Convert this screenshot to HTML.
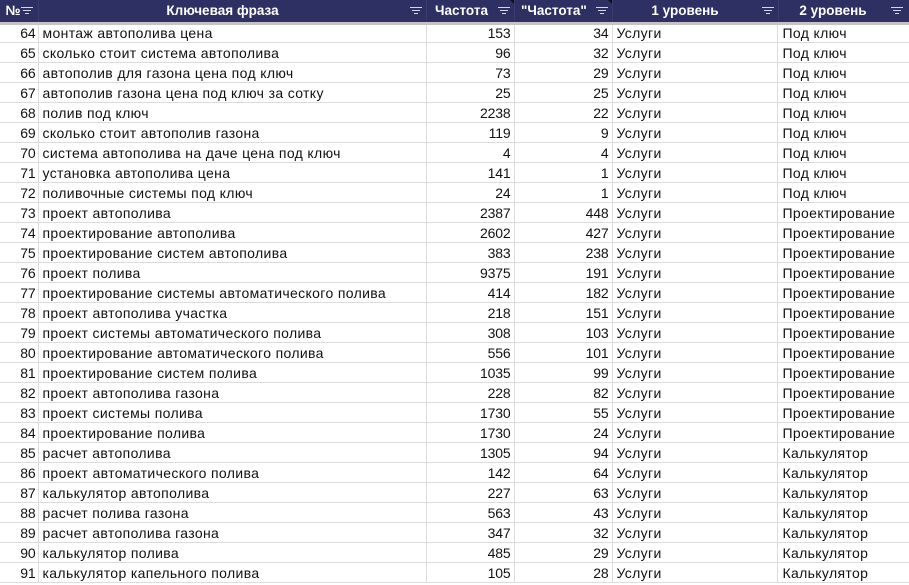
<!DOCTYPE html>
<html lang="ru"><head><meta charset="utf-8"><title>Таблица</title>
<style>
html,body{margin:0;padding:0;background:#fff}
#w{position:relative;width:909px;height:585px;overflow:hidden;font-family:"Liberation Sans",sans-serif;background:#fff}
#h{position:absolute;left:0;top:0;width:909px;height:22px;background:#2e2f62}
#g{position:absolute;left:0;top:22px;width:909px;height:3px;background:#c4c4c4}
.t{position:absolute;top:3px;color:#fff;font-weight:bold;font-size:13.5px;line-height:16px;white-space:nowrap;text-align:center}
.v{position:absolute;top:0;width:1px;height:22px;background:#3a3b6e}
.f{position:absolute;top:7px}
.c{position:absolute;top:0;width:0;height:0;border-top:4px solid #111;border-left:4px solid transparent}
table{position:absolute;left:0;top:23px;border-collapse:collapse;table-layout:fixed;width:909px;font-size:14px;letter-spacing:.35px;color:#111}
td{height:18px;padding:1px 0 0 4px;border-bottom:1px solid #dcdcdc;border-right:1px solid #dcdcdc;line-height:18px;white-space:nowrap;overflow:hidden}
td:nth-child(1),td:nth-child(3),td:nth-child(4){text-align:right;padding:1px 3px 0 0;letter-spacing:-.15px}
td:nth-child(1){padding-right:2px}
td:nth-child(6){border-right:0;padding-left:5px}
</style></head><body><div id="w">
<table><colgroup><col style="width:38px"><col style="width:388px"><col style="width:88px"><col style="width:98px"><col style="width:165px"><col style="width:132px"></colgroup>
<tr><td>64</td><td>монтаж автополива цена</td><td>153</td><td>34</td><td>Услуги</td><td>Под ключ</td></tr>
<tr><td>65</td><td>сколько стоит система автополива</td><td>96</td><td>32</td><td>Услуги</td><td>Под ключ</td></tr>
<tr><td>66</td><td>автополив для газона цена под ключ</td><td>73</td><td>29</td><td>Услуги</td><td>Под ключ</td></tr>
<tr><td>67</td><td>автополив газона цена под ключ за сотку</td><td>25</td><td>25</td><td>Услуги</td><td>Под ключ</td></tr>
<tr><td>68</td><td>полив под ключ</td><td>2238</td><td>22</td><td>Услуги</td><td>Под ключ</td></tr>
<tr><td>69</td><td>сколько стоит автополив газона</td><td>119</td><td>9</td><td>Услуги</td><td>Под ключ</td></tr>
<tr><td>70</td><td>система автополива на даче цена под ключ</td><td>4</td><td>4</td><td>Услуги</td><td>Под ключ</td></tr>
<tr><td>71</td><td>установка автополива цена</td><td>141</td><td>1</td><td>Услуги</td><td>Под ключ</td></tr>
<tr><td>72</td><td>поливочные системы под ключ</td><td>24</td><td>1</td><td>Услуги</td><td>Под ключ</td></tr>
<tr><td>73</td><td>проект автополива</td><td>2387</td><td>448</td><td>Услуги</td><td>Проектирование</td></tr>
<tr><td>74</td><td>проектирование автополива</td><td>2602</td><td>427</td><td>Услуги</td><td>Проектирование</td></tr>
<tr><td>75</td><td>проектирование систем автополива</td><td>383</td><td>238</td><td>Услуги</td><td>Проектирование</td></tr>
<tr><td>76</td><td>проект полива</td><td>9375</td><td>191</td><td>Услуги</td><td>Проектирование</td></tr>
<tr><td>77</td><td>проектирование системы автоматического полива</td><td>414</td><td>182</td><td>Услуги</td><td>Проектирование</td></tr>
<tr><td>78</td><td>проект автополива участка</td><td>218</td><td>151</td><td>Услуги</td><td>Проектирование</td></tr>
<tr><td>79</td><td>проект системы автоматического полива</td><td>308</td><td>103</td><td>Услуги</td><td>Проектирование</td></tr>
<tr><td>80</td><td>проектирование автоматического полива</td><td>556</td><td>101</td><td>Услуги</td><td>Проектирование</td></tr>
<tr><td>81</td><td>проектирование систем полива</td><td>1035</td><td>99</td><td>Услуги</td><td>Проектирование</td></tr>
<tr><td>82</td><td>проект автополива газона</td><td>228</td><td>82</td><td>Услуги</td><td>Проектирование</td></tr>
<tr><td>83</td><td>проект системы полива</td><td>1730</td><td>55</td><td>Услуги</td><td>Проектирование</td></tr>
<tr><td>84</td><td>проектирование полива</td><td>1730</td><td>24</td><td>Услуги</td><td>Проектирование</td></tr>
<tr><td>85</td><td>расчет автополива</td><td>1305</td><td>94</td><td>Услуги</td><td>Калькулятор</td></tr>
<tr><td>86</td><td>проект автоматического полива</td><td>142</td><td>64</td><td>Услуги</td><td>Калькулятор</td></tr>
<tr><td>87</td><td>калькулятор автополива</td><td>227</td><td>63</td><td>Услуги</td><td>Калькулятор</td></tr>
<tr><td>88</td><td>расчет полива газона</td><td>563</td><td>43</td><td>Услуги</td><td>Калькулятор</td></tr>
<tr><td>89</td><td>расчет автополива газона</td><td>347</td><td>32</td><td>Услуги</td><td>Калькулятор</td></tr>
<tr><td>90</td><td>калькулятор полива</td><td>485</td><td>29</td><td>Услуги</td><td>Калькулятор</td></tr>
<tr><td>91</td><td>калькулятор капельного полива</td><td>105</td><td>28</td><td>Услуги</td><td>Калькулятор</td></tr>
</table>
<div id="h"></div><div id="g"></div>
<div class="v" style="left:38px"></div><div class="v" style="left:426px"></div><div class="v" style="left:514px"></div><div class="v" style="left:612px"></div><div class="v" style="left:778px"></div>
<span class="t" style="left:5px;width:16px">№</span>
<span class="t" style="left:166px;width:113px">Ключевая фраза</span>
<span class="t" style="left:435px;width:52px">Частота</span>
<span class="t" style="left:521px;width:65px">"Частота"</span>
<span class="t" style="left:651px;width:68px">1 уровень</span>
<span class="t" style="left:799px;width:68px">2 уровень</span>
<svg class="f" style="left:21px" width="13" height="8"><path d="M0 .5H12M2 3.5H10M4 6.5H8" stroke="#d5d6e6" fill="none"/></svg>
<svg class="f" style="left:410px" width="13" height="8"><path d="M0 .5H12M2 3.5H10M4 6.5H8" stroke="#d5d6e6" fill="none"/></svg>
<svg class="f" style="left:498px" width="13" height="8"><path d="M0 .5H12M2 3.5H10M4 6.5H8" stroke="#d5d6e6" fill="none"/></svg>
<svg class="f" style="left:596px" width="13" height="8"><path d="M0 .5H12M2 3.5H10M4 6.5H8" stroke="#d5d6e6" fill="none"/></svg>
<svg class="f" style="left:762px" width="13" height="8"><path d="M0 .5H12M2 3.5H10M4 6.5H8" stroke="#d5d6e6" fill="none"/></svg>
<svg class="f" style="left:891px" width="13" height="8"><path d="M0 .5H12M2 3.5H10M4 6.5H8" stroke="#d5d6e6" fill="none"/></svg>
<div class="c" style="left:510px"></div><div class="c" style="left:608px"></div>
</div></body></html>
